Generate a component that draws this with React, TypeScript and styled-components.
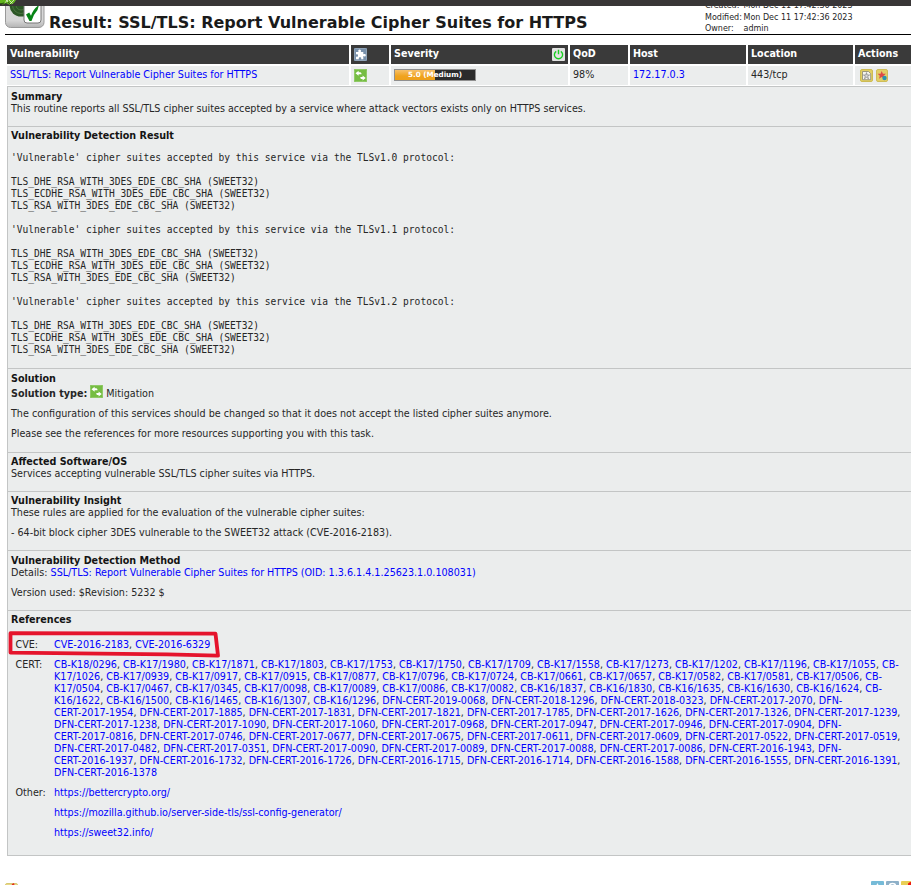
import React from "react";
import styled, { createGlobalStyle } from "styled-components";

const GlobalStyle = createGlobalStyle`
  html, body { margin: 0; padding: 0; background: #fff; }
  body {
    font-family: "DejaVu Sans", sans-serif;
    font-size: 9.6px;
    line-height: 12px;
    color: #262626;
    overflow: hidden;
  }
  * { box-sizing: border-box; }
  svg { display: block; flex: none; }
`;

const Page = styled.main`
  width: 911px;
  height: 885px;
  overflow: hidden;
  display: flex;
  flex-direction: column;
`;

const TopBar = styled.div`
  height: 6px;
  flex: none;
  background: #393637;
  position: relative;
`;

const Leaf = styled.svg`
  position: absolute;
  left: 0;
  top: 0;
`;

const TitleBar = styled.header`
  height: 29px;
  flex: none;
  margin-left: 5px;
  border-bottom: 1px solid #000;
  display: flex;
  overflow: hidden;
`;

const Title = styled.h1`
  margin: 7px 0 0 3px;
  font-size: 16px;
  line-height: 20px;
  font-weight: bold;
  white-space: nowrap;
  width: 656px;
  color: #1a1a1a;
`;

const Meta = styled.dl`
  margin: -6px 0 0;
  display: grid;
  grid-template-columns: 38.5px auto;
  grid-auto-rows: 11.5px;
  align-content: start;
  font-size: 8px;
  line-height: 11px;
  white-space: nowrap;
  dt, dd { margin: 0; }
`;

const Table = styled.div`
  margin: 10px 0 0 7px;
  display: grid;
  grid-template-columns: 342px 38px 177px 58px 116px 105px 56px;
  grid-template-rows: 19px 19px;
  gap: 2px;
  flex: none;
`;

const Cell = styled.div<{ $head?: boolean; $inset?: number }>`
  display: flex;
  align-items: flex-start;
  justify-content: space-between;
  padding: 3px 3px 0 ${(p) => p.$inset ?? 3}px;
  white-space: nowrap;
  background: ${(p) => (p.$head ? "#3a3a3a" : "#ebeded")};
  color: ${(p) => (p.$head ? "#fff" : "#262626")};
  font-weight: ${(p) => (p.$head ? "bold" : "normal")};
`;

const Link = styled.a`
  color: #0000ff;
  text-decoration: none;
`;

const SeverityBar = styled.div`
  width: 82px;
  height: 12px;
  border: 1px solid #8f8f8f;
  background: linear-gradient(90deg, transparent 50%, #2b2b2b 50%),
    linear-gradient(#f7c069, #f0a31e 60%, #eea01a);
  color: #fff;
  font-size: 7.2px;
  line-height: 10px;
  font-weight: bold;
  text-align: center;
`;

const Actions = styled.div`
  display: flex;
  gap: 3px;
`;

const Details = styled.div`
  margin: 1px 0 0 7px;
  border: 1px solid #c3c5c5;
  border-width: 0 0 1px 1px;
  background: #ebeded;
  flex: none;
`;

const Section = styled.section<{ $height: number; $pad: number }>`
  height: ${(p) => p.$height}px;
  padding: ${(p) => p.$pad}px 0 0 3px;
  border-top: 1px solid #c3c5c5;
  white-space: nowrap;
`;

const Heading = styled.h2`
  margin: 0;
  font-size: 9.6px;
  line-height: 12px;
  font-weight: bold;
  color: #141414;
`;

const Para = styled.p<{ $gap?: number }>`
  margin: ${(p) => p.$gap ?? 0}px 0 0;
`;

const Output = styled.pre`
  margin: 10px 0 0;
  font-family: "DejaVu Sans Mono", monospace;
  font-size: 9.6px;
  line-height: 12px;
  letter-spacing: -0.01px;
`;

const SolutionType = styled.div`
  display: flex;
  height: 15px;
  padding-top: 3px;
  gap: 3px;
  svg { margin-top: -3px; }
`;

const References = styled.div`
  position: relative;
  margin: 13px 0 0 4.5px;
  display: grid;
  grid-template-columns: 38.5px 1fr;
  row-gap: 8px;
`;

const LinkLine = styled.div`
  height: 12px;
`;

const LinkStack = styled.div`
  display: grid;
  row-gap: 8px;
`;

const Marker = styled.svg`
  position: absolute;
  left: -8.5px;
  top: -9.5px;
  pointer-events: none;
`;

const NextSection = styled.footer`
  flex: none;
  height: 40px;
  margin: 25px 0 0 5px;
  display: flex;
  align-items: flex-start;
  overflow: hidden;
`;

const NextTitle = styled.h2`
  margin: 2px 0 0 3px;
  font-size: 14px;
  line-height: 16px;
  white-space: nowrap;
  width: 849px;
  flex: none;
`;

const Tools = styled.div`
  display: flex;
  gap: 2px;
  flex: none;
`;

const TaskLogo = () => (
  <svg width="41" height="28" viewBox="0 0 41 28">
    <defs>
      <linearGradient id="tile" x1="0" y1="0" x2="0" y2="1">
        <stop offset="0" stopColor="#dcdcdc" />
        <stop offset=".8" stopColor="#d6d6d6" />
        <stop offset="1" stopColor="#b4b4b4" />
      </linearGradient>
    </defs>
    <rect x=".5" y="-14" width="38.5" height="35.5" rx="5" fill="url(#tile)" stroke="#999" />
    <circle cx="16" cy="-1" r="11.5" fill="#2c5726" />
    <circle cx="16" cy="-1" r="8.5" fill="none" stroke="#57804a" strokeWidth=".7" />
    <circle cx="16" cy="-1" r="5" fill="none" stroke="#57804a" strokeWidth=".7" />
    <rect x="19" y="-4" width="17" height="21" rx="3" fill="#fff" stroke="#777" />
    <path d="M21 8.5 L24.2 6.5 L26 9.8 Q28 3 34 -1 L32.5 4 Q28 9 26.5 15 L24.5 15 Z" fill="#078416" />
  </svg>
);

const MitigationIcon = () => (
  <svg width="13" height="13" viewBox="0 0 13 13">
    <rect width="13" height="13" rx="1" fill="#76bd43" />
    <rect x=".5" y=".5" width="12" height="12" rx="1" fill="none" stroke="#91ca68" />
    <path d="M1.5 4.2 4.6 1.8V3.2H6.4Q7.6 3.6 7.6 5.2H4.6V6.8Z M11.7 9 8.6 6.6V8H6.4Q6 9 7 10H8.6V11.4Z" fill="#fff" />
  </svg>
);

const PuzzleIcon = () => (
  <svg width="13" height="13" viewBox="0 0 13 13">
    <rect width="13" height="13" rx="1" fill="#7890aa" />
    <rect x=".5" y=".5" width="12" height="12" rx="1" fill="none" stroke="#91a5b9" />
    <path d="M2 4H4.6C3.7 2.2 4.5 1.4 5.6 1.4S7.6 2.2 6.7 4H9.3V6.3C10.8 5.5 11.8 6 11.8 7.2S10.8 8.8 9.3 8V11.2H7.1C7.6 9.8 7 9.2 6 9.2S4.5 9.8 4.9 11.2H2V8.4C3.4 9 4 8.4 4 7.4S3.4 6 2 6.5Z" fill="#fff" />
  </svg>
);

const PowerIcon = () => (
  <svg width="13" height="13" viewBox="0 0 13 13">
    <rect width="13" height="13" rx="1" fill="#e2e2e2" />
    <path d="M4.2 3.3A4.1 4.1 0 1 0 8.8 3.3M6.5 1.7V6.3" fill="none" stroke="#17cf20" strokeWidth="1.4" />
  </svg>
);

const NoteIcon = () => (
  <svg width="13" height="13" viewBox="0 0 13 13">
    <rect x=".5" y=".5" width="12" height="12" rx="1.5" fill="#e2cf62" stroke="#cdbb52" />
    <path d="M2.5 2.5H8.5L10.7 4.7V10.7H2.5Z" fill="#f5f5ed" stroke="#888776" strokeWidth=".8" />
    <path d="M6.5 3.6 7.2 6H9.6L7.7 7.4 8.6 9.8 6.5 8.4 4.4 9.8 5.3 7.4 3.4 6H5.8Z" fill="#d8d8d5" stroke="#77777a" strokeWidth=".6" />
  </svg>
);

const OverrideIcon = () => (
  <svg width="12" height="13" viewBox="0 0 12 13">
    <rect x=".5" y=".5" width="11" height="12" rx="1.5" fill="#e3cf66" stroke="#cfbd58" />
    <path d="M5.7 2 6.9 4.8H9.9L7.6 6.7 8.3 9.6 5.7 8 3 9.8 3.8 6.7 1.6 4.8H4.6Z" fill="#de4a48" />
    <circle cx="8.5" cy="9" r="2.2" fill="#2a93b2" />
  </svg>
);

const certLines = [
  "CB-K18/0296, CB-K17/1980, CB-K17/1871, CB-K17/1803, CB-K17/1753, CB-K17/1750, CB-K17/1709, CB-K17/1558, CB-K17/1273, CB-K17/1202, CB-K17/1196, CB-K17/1055, CB-",
  "K17/1026, CB-K17/0939, CB-K17/0917, CB-K17/0915, CB-K17/0877, CB-K17/0796, CB-K17/0724, CB-K17/0661, CB-K17/0657, CB-K17/0582, CB-K17/0581, CB-K17/0506, CB-",
  "K17/0504, CB-K17/0467, CB-K17/0345, CB-K17/0098, CB-K17/0089, CB-K17/0086, CB-K17/0082, CB-K16/1837, CB-K16/1830, CB-K16/1635, CB-K16/1630, CB-K16/1624, CB-",
  "K16/1622, CB-K16/1500, CB-K16/1465, CB-K16/1307, CB-K16/1296, DFN-CERT-2019-0068, DFN-CERT-2018-1296, DFN-CERT-2018-0323, DFN-CERT-2017-2070, DFN-",
  "CERT-2017-1954, DFN-CERT-2017-1885, DFN-CERT-2017-1831, DFN-CERT-2017-1821, DFN-CERT-2017-1785, DFN-CERT-2017-1626, DFN-CERT-2017-1326, DFN-CERT-2017-1239,",
  "DFN-CERT-2017-1238, DFN-CERT-2017-1090, DFN-CERT-2017-1060, DFN-CERT-2017-0968, DFN-CERT-2017-0947, DFN-CERT-2017-0946, DFN-CERT-2017-0904, DFN-",
  "CERT-2017-0816, DFN-CERT-2017-0746, DFN-CERT-2017-0677, DFN-CERT-2017-0675, DFN-CERT-2017-0611, DFN-CERT-2017-0609, DFN-CERT-2017-0522, DFN-CERT-2017-0519,",
  "DFN-CERT-2017-0482, DFN-CERT-2017-0351, DFN-CERT-2017-0090, DFN-CERT-2017-0089, DFN-CERT-2017-0088, DFN-CERT-2017-0086, DFN-CERT-2016-1943, DFN-",
  "CERT-2016-1937, DFN-CERT-2016-1732, DFN-CERT-2016-1726, DFN-CERT-2016-1715, DFN-CERT-2016-1714, DFN-CERT-2016-1588, DFN-CERT-2016-1555, DFN-CERT-2016-1391,",
  "DFN-CERT-2016-1378",
];

const Linked = ({ text }: { text: string }) => (
  <LinkLine>
    {text.split(/(, ?)/).map((part, i) => (i % 2 ? part : part && <Link key={i}>{part}</Link>))}
  </LinkLine>
);

const detection = ["1.0", "1.1", "1.2"]
  .map(
    (v) => `'Vulnerable' cipher suites accepted by this service via the TLSv${v} protocol:

TLS_DHE_RSA_WITH_3DES_EDE_CBC_SHA (SWEET32)
TLS_ECDHE_RSA_WITH_3DES_EDE_CBC_SHA (SWEET32)
TLS_RSA_WITH_3DES_EDE_CBC_SHA (SWEET32)`
  )
  .join("\n\n");

export default function App() {
  return (
    <Page>
      <GlobalStyle />
      <TopBar>
        <Leaf width="18" height="6" viewBox="0 0 18 6">
          <path d="M0 0H16L14 3 10 5 6 3 3 4.5 0 3.5Z" fill="#62b51c" />
          <path d="M6 0 10 4M9 0 12.5 3.5M5 2.5 8 0M10 4 14 0" fill="none" stroke="#e0f2cc" strokeWidth=".8" />
          <path d="M8 2 11 5M0 4 4 3" fill="none" stroke="#17330a" strokeWidth=".8" />
        </Leaf>
      </TopBar>
      <TitleBar>
        <TaskLogo />
        <Title>Result: SSL/TLS: Report Vulnerable Cipher Suites for HTTPS</Title>
        <Meta>
          <dt>Created:</dt><dd>Mon Dec 11 17:42:36 2023</dd>
          <dt>Modified:</dt><dd>Mon Dec 11 17:42:36 2023</dd>
          <dt>Owner:</dt><dd>admin</dd>
        </Meta>
      </TitleBar>
      <Table>
        <Cell $head>Vulnerability</Cell>
        <Cell $head><PuzzleIcon /></Cell>
        <Cell $head>Severity<PowerIcon /></Cell>
        <Cell $head>QoD</Cell>
        <Cell $head>Host</Cell>
        <Cell $head>Location</Cell>
        <Cell $head>Actions</Cell>
        <Cell><Link>SSL/TLS: Report Vulnerable Cipher Suites for HTTPS</Link></Cell>
        <Cell><MitigationIcon /></Cell>
        <Cell><SeverityBar>5.0 (Medium)</SeverityBar></Cell>
        <Cell>98%</Cell>
        <Cell><Link>172.17.0.3</Link></Cell>
        <Cell>443/tcp</Cell>
        <Cell $inset={5}><Actions><NoteIcon /><OverrideIcon /></Actions></Cell>
      </Table>
      <Details>
        <Section $height={40} $pad={4}>
          <Heading>Summary</Heading>
          <Para>This routine reports all SSL/TLS cipher suites accepted by a service where attack vectors exists only on HTTPS services.</Para>
        </Section>
        <Section $height={242} $pad={3}>
          <Heading>Vulnerability Detection Result</Heading>
          <Output>{detection}</Output>
        </Section>
        <Section $height={84} $pad={4}>
          <Heading>Solution</Heading>
          <SolutionType><b>Solution type:</b><MitigationIcon />Mitigation</SolutionType>
          <Para $gap={8}>The configuration of this services should be changed so that it does not accept the listed cipher suites anymore.</Para>
          <Para $gap={8}>Please see the references for more resources supporting you with this task.</Para>
        </Section>
        <Section $height={39} $pad={3}>
          <Heading>Affected Software/OS</Heading>
          <Para>Services accepting vulnerable SSL/TLS cipher suites via HTTPS.</Para>
        </Section>
        <Section $height={59} $pad={3}>
          <Heading>Vulnerability Insight</Heading>
          <Para>These rules are applied for the evaluation of the vulnerable cipher suites:</Para>
          <Para $gap={8}>- 64-bit block cipher 3DES vulnerable to the SWEET32 attack (CVE-2016-2183).</Para>
        </Section>
        <Section $height={60} $pad={4}>
          <Heading>Vulnerability Detection Method</Heading>
          <Para>Details: <Link>SSL/TLS: Report Vulnerable Cipher Suites for HTTPS (OID: 1.3.6.1.4.1.25623.1.0.108031)</Link></Para>
          <Para $gap={8}>Version used: $Revision: 5232 $</Para>
        </Section>
        <Section $height={245} $pad={3}>
          <Heading>References</Heading>
          <References>
            <span>CVE:</span>
            <Linked text="CVE-2016-2183, CVE-2016-6329" />
            <span>CERT:</span>
            <div>{certLines.map((line) => <Linked key={line} text={line} />)}</div>
            <span>Other:</span>
            <LinkStack>
              <Link>https://bettercrypto.org/</Link>
              <Link>https://mozilla.github.io/server-side-tls/ssl-config-generator/</Link>
              <Link>https://sweet32.info/</Link>
            </LinkStack>
            <Marker width="216" height="28" viewBox="0 0 216 28">
              <path d="M3.5 3.2 L208.5 3.7 L211 25.6 L160 24.4 L3.5 22.6 Z" fill="none" stroke="#e5142c" strokeWidth="3.8" strokeLinejoin="round" />
            </Marker>
          </References>
        </Section>
      </Details>
      <NextSection>
        <svg width="14" height="13" viewBox="0 0 14 13">
          <rect x=".5" y="2.5" width="12" height="10" rx="1.5" fill="#e8d887" stroke="#d8c873" />
          <path d="M7 3 9 2 10 6H6Z" fill="#e5321f" />
        </svg>
        <NextTitle>User Tags (none)</NextTitle>
        <Tools>
          <svg width="13" height="13" viewBox="0 0 13 13">
            <rect width="13" height="13" rx="1" fill="#76bbd8" />
            <path d="M6.5 2 8 5H11L8.5 7.5 9.5 11 6.5 9 3.5 11 4.5 7.5 2 5H5Z" fill="#fff" />
          </svg>
          <svg width="13" height="13" viewBox="0 0 13 13">
            <rect width="13" height="13" rx="1" fill="#8eb0c8" />
            <path d="M3.5 5Q3.5 2.5 6.5 2.5T9.5 5Q9.5 6 6.5 8" fill="none" stroke="#fff" strokeWidth="1.6" />
          </svg>
          <svg width="13" height="13" viewBox="0 0 13 13">
            <rect width="13" height="13" rx="1" fill="#e8cf55" />
            <path d="M7 2.5 9 1H13V7H7Z" fill="#ee1c12" />
          </svg>
        </Tools>
      </NextSection>
    </Page>
  );
}
